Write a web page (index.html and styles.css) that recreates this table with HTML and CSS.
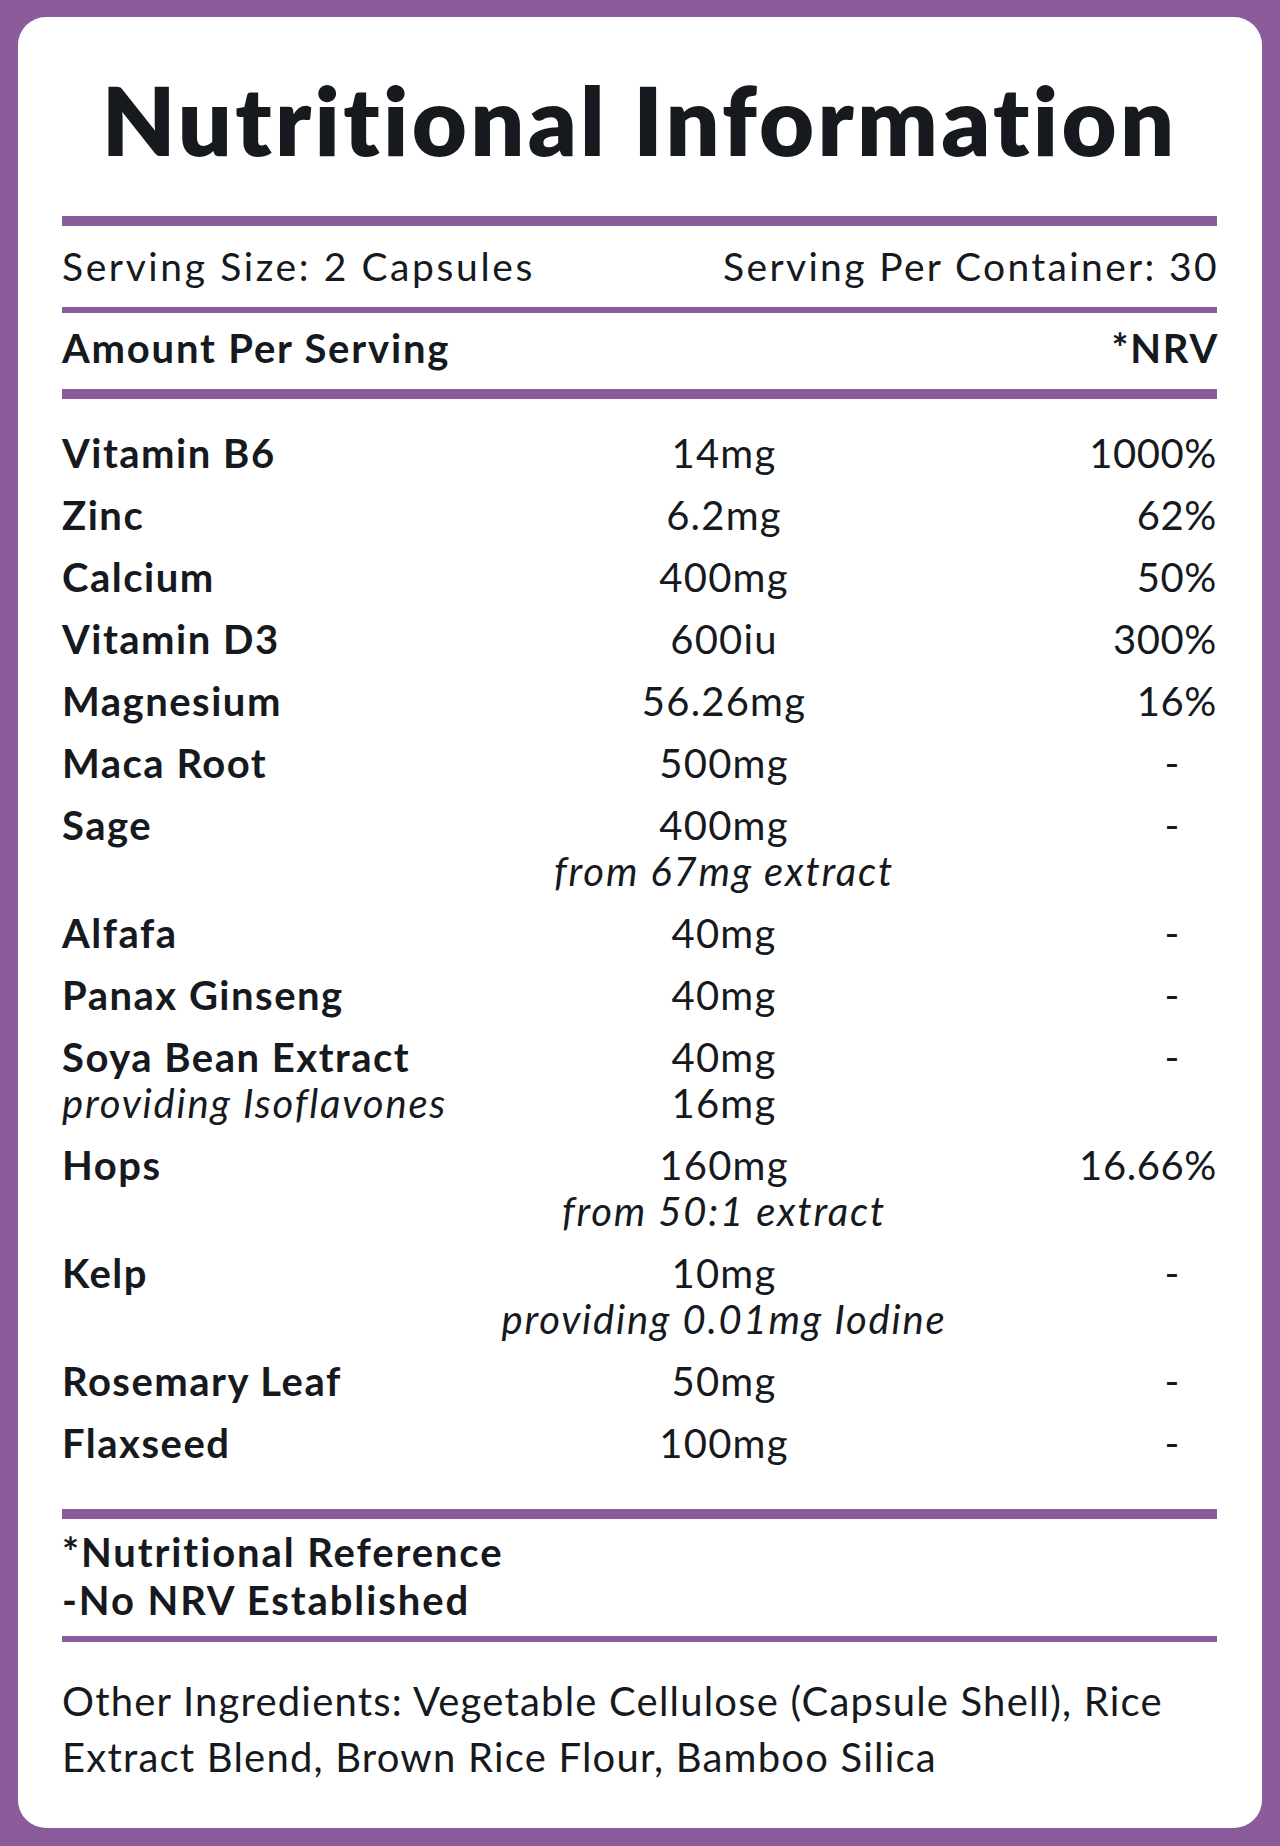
FILE: index.html
```html
<!DOCTYPE html>
<html lang="en">
<head>
<meta charset="utf-8">
<title>Nutritional Information</title>
<link rel="stylesheet" href="styles.css">
</head>
<body>
<main class="card">
  <h1 class="title">Nutritional Information</h1>
  <div class="bar bar-thick"></div>
  <div class="serving">
    <span>Serving Size: 2 Capsules</span>
    <span class="per">Serving Per Container: 30</span>
  </div>
  <div class="bar bar-thin"></div>
  <div class="amount">
    <span>Amount Per Serving</span>
    <span>*NRV</span>
  </div>
  <div class="bar bar-thick"></div>

  <div class="rows">
    <div class="row"><div class="name">Vitamin B6</div><div class="qty">14mg</div><div class="nrv">1000%</div></div>
    <div class="row"><div class="name">Zinc</div><div class="qty">6.2mg</div><div class="nrv">62%</div></div>
    <div class="row"><div class="name">Calcium</div><div class="qty">400mg</div><div class="nrv">50%</div></div>
    <div class="row"><div class="name">Vitamin D3</div><div class="qty">600iu</div><div class="nrv">300%</div></div>
    <div class="row"><div class="name">Magnesium</div><div class="qty">56.26mg</div><div class="nrv">16%</div></div>
    <div class="row"><div class="name">Maca Root</div><div class="qty">500mg</div><div class="nrv dash">-</div></div>
    <div class="row"><div class="name">Sage</div><div class="qty">400mg<span class="sub">from 67mg extract</span></div><div class="nrv dash">-</div></div>
    <div class="row"><div class="name">Alfafa</div><div class="qty">40mg</div><div class="nrv dash">-</div></div>
    <div class="row"><div class="name">Panax Ginseng</div><div class="qty">40mg</div><div class="nrv dash">-</div></div>
    <div class="row"><div class="name">Soya Bean Extract<span class="sub">providing Isoflavones</span></div><div class="qty">40mg<span class="sub upright">16mg</span></div><div class="nrv dash">-</div></div>
    <div class="row"><div class="name">Hops</div><div class="qty">160mg<span class="sub">from 50:1 extract</span></div><div class="nrv">16.66%</div></div>
    <div class="row"><div class="name">Kelp</div><div class="qty">10mg<span class="sub">providing 0.01mg Iodine</span></div><div class="nrv dash">-</div></div>
    <div class="row"><div class="name">Rosemary Leaf</div><div class="qty">50mg</div><div class="nrv dash">-</div></div>
    <div class="row"><div class="name">Flaxseed</div><div class="qty">100mg</div><div class="nrv dash">-</div></div>
  </div>

  <div class="bar bar-thick"></div>
  <div class="notes">
    <p>*Nutritional Reference</p>
    <p>-No NRV Established</p>
  </div>
  <div class="bar bar-thin"></div>
  <p class="other">Other Ingredients: Vegetable Cellulose (Capsule Shell), Rice Extract Blend, Brown Rice Flour, Bamboo Silica</p>
</main>
</body>
</html>
```

FILE: styles.css
```css
* { box-sizing: border-box; }

html, body {
  margin: 0;
  padding: 0;
}

body {
  background: #8a5c9b;
  padding: 17px 18px 18px 18px;
  font-family: "Lato", "Liberation Sans", sans-serif;
  font-variant-ligatures: none;
  color: #16191d;
}

.card {
  background: #ffffff;
  border-radius: 28px;
  padding: 55px 45px 41px 44px;
  min-height: 1811px;
}

.title {
  margin: 0 0 49px 0;
  font-size: 95px;
  line-height: 1;
  font-weight: 800;
  text-align: center;
  letter-spacing: 3.3px;
}

.bar {
  background: #8a5c9b;
}

.bar-thick { height: 10px; }
.bar-thin { height: 6px; }

.serving {
  display: flex;
  justify-content: space-between;
  font-size: 39px;
  line-height: 1;
  letter-spacing: 2.6px;
  padding: 21px 0 21px 0;
}

.serving .per {
  letter-spacing: 2.35px;
}

.serving span:last-child,
.amount span:last-child {
  margin-right: -2px;
}

.amount {
  display: flex;
  justify-content: space-between;
  font-size: 40px;
  line-height: 1;
  font-weight: 700;
  letter-spacing: 1.8px;
  padding: 15px 0 21px 0;
}

.rows {
  display: flex;
  flex-direction: column;
  gap: 16px;
  padding: 31px 0 43px 0;
}

.row {
  display: grid;
  grid-template-columns: 400px 524px 1fr;
  font-size: 40px;
  line-height: 46px;
}

.name {
  font-weight: 700;
  letter-spacing: 1.5px;
  display: flex;
  flex-direction: column;
  align-items: flex-start;
}

.qty {
  text-align: center;
  letter-spacing: 1.2px;
  display: flex;
  flex-direction: column;
  align-items: center;
}

.nrv {
  text-align: right;
  letter-spacing: 0.6px;
}

.nrv.dash {
  padding-right: 37px;
}

.sub {
  font-weight: 400;
  font-style: italic;
  font-size: 40px;
  line-height: 46px;
  letter-spacing: 1.8px;
}

.sub.upright {
  font-style: normal;
  letter-spacing: 1.2px;
}

.notes {
  padding: 9px 0 12px 0;
  font-size: 40px;
  line-height: 48px;
  font-weight: 700;
  letter-spacing: 1.9px;
}

.notes p {
  margin: 0;
}

.other {
  margin: 0;
  padding-top: 31px;
  font-size: 40px;
  line-height: 56px;
  letter-spacing: 1.2px;
}
```
